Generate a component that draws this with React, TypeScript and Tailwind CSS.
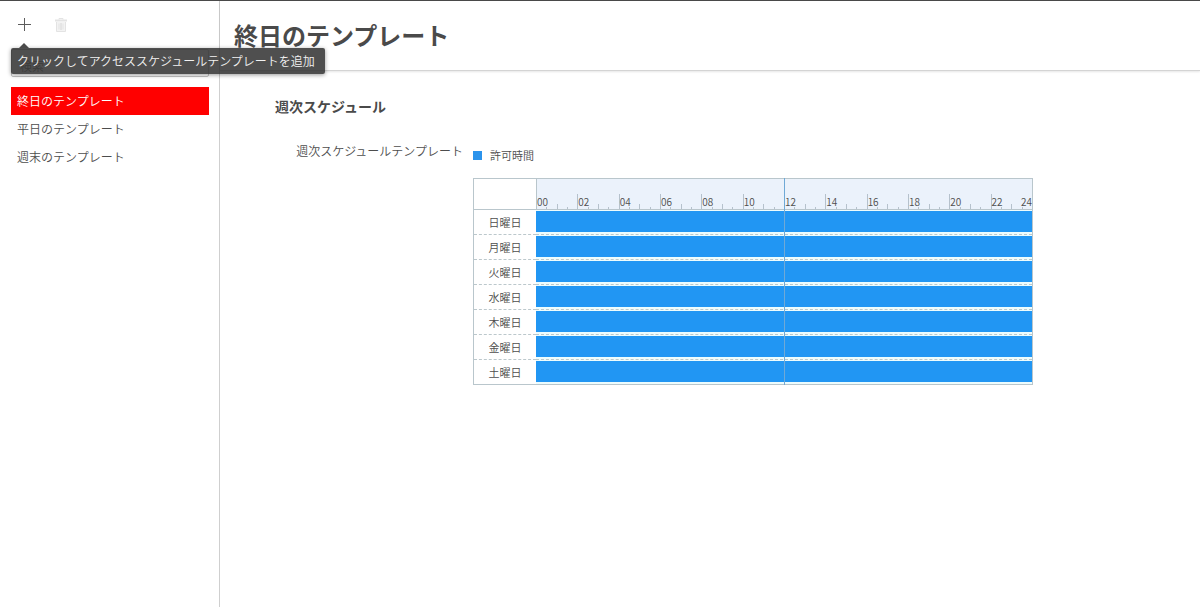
import { useState } from 'react'
import clsx from 'clsx'

const templates = ['終日のテンプレート', '平日のテンプレート', '週末のテンプレート']
const days = ['日曜日', '月曜日', '火曜日', '水曜日', '木曜日', '金曜日', '土曜日']
const hours = ['00', '02', '04', '06', '08', '10', '12', '14', '16', '18', '20', '22']

function PlusIcon() {
  return (
    <svg width="14" height="14" viewBox="0 0 14 14" stroke="#5c5c5c" fill="none" aria-hidden="true">
      <path d="M6.5 0v13M0 6.5h13" />
    </svg>
  )
}

function TrashIcon() {
  return (
    <svg width="12" height="14" viewBox="0 0 12 14" fill="none" stroke="#e3e3e3" aria-hidden="true">
      <path d="M4 1.5V0.5h4v1" />
      <path d="M0 2.5h12" strokeWidth="2" />
      <path d="M1.5 4v9.5h9V4" fill="#f3f3f3" />
      <path d="M4 5.5v6M8 5.5v6" />
      <path d="M6 5v7" stroke="#d6d6d6" />
    </svg>
  )
}

function Sidebar({ selected, onSelect }: { selected: number; onSelect: (i: number) => void }) {
  return (
    <aside className="w-[220px] shrink-0 border-r border-[#cfcfcf] pl-[11px] pr-[10px] pt-4">
      <div className="flex gap-[21px] px-[7px]">
        <div className="relative">
          <button type="button" aria-label="追加" aria-describedby="add-tip" className="block h-4 w-4">
            <PlusIcon />
          </button>
          <div
            id="add-tip"
            role="tooltip"
            className="absolute -left-[7px] top-[31px] z-10 h-[26px] w-[314px] whitespace-nowrap rounded-xs bg-[#323232]/86 px-[6px] leading-[26px] text-[#f2f2f2] shadow-[0_1px_4px_rgba(0,0,0,0.4)]"
          >
            <svg className="absolute -top-[6px] left-[7px]" width="12" height="6" viewBox="0 0 12 6" aria-hidden="true">
              <path d="M1 6l5-5 5 5z" fill="#4b4b4b" />
            </svg>
            クリックしてアクセススケジュールテンプレートを追加
          </div>
        </div>
        <button type="button" aria-label="削除" disabled className="block h-4 w-4">
          <TrashIcon />
        </button>
      </div>
      <input
        type="search"
        aria-label="検索"
        placeholder="検索"
        className="mt-4 block h-7 w-full rounded-xs border border-[#c4c4c4] px-2 pt-1 placeholder:text-[#777]"
      />
      <ul className="mt-[10px]">
        {templates.map((name, i) => (
          <li key={name}>
            <button
              type="button"
              onClick={() => onSelect(i)}
              className={clsx('block h-7 w-full px-[6px] text-left', i === selected && 'bg-[#ff0000] text-white')}
            >
              {name}
            </button>
          </li>
        ))}
      </ul>
    </aside>
  )
}

function HourScale() {
  return (
    <div className="flex h-[30px] items-end text-[10px] leading-[15px]">
      {hours.map((h, i) => (
        <div
          key={h}
          className={clsx('relative flex h-[15px] flex-1 items-end text-left', i > 0 && 'border-l border-[#b5c1cc]')}
        >
          <span className="absolute left-0 top-0">{h}</span>
          <div className="flex flex-1 items-end">
            <span className="h-[2px] flex-1" />
            <span className="h-[2px] flex-1 border-l border-[#b5c1cc]" />
            <span className="h-[5px] flex-1 border-l border-[#b5c1cc]" />
            <span className="h-[2px] flex-1 border-l border-[#b5c1cc]" />
          </div>
          {h === '22' && <span className="absolute right-0 top-0">24</span>}
        </div>
      ))}
    </div>
  )
}

function WeekTable() {
  return (
    <div className="relative mt-[15px]">
      <table className="w-full table-fixed border-separate border-spacing-0 border border-b-0 border-[#b9c6cc] text-[11px]">
        <thead>
          <tr>
            <td className="w-[62px] border-b border-[#b9c6cc] p-0" />
            <th scope="col" className="border-b border-l border-[#b9c6cc] bg-[#ebf2fb] p-0 font-[350]">
              <HourScale />
            </th>
          </tr>
        </thead>
        <tbody>
          {days.map((day, i) => {
            const line = i === days.length - 1 ? 'border-solid border-[#b9c6cc]' : 'border-dashed border-[#bcc8cc]'
            return (
              <tr key={day}>
                <th scope="row" className={clsx('h-[25px] border-b p-0 text-center font-[350] leading-[22px]', line)}>
                  {day}
                </th>
                <td className={clsx('h-[25px] border-b bg-[#edfcfd] p-0', line)}>
                  <div className="mb-px h-[21px] bg-[#2196f3]" />
                </td>
              </tr>
            )
          })}
        </tbody>
      </table>
      <div className="pointer-events-none absolute inset-y-0 left-[63px] right-0 flex">
        <span className="flex-1" />
        <span className="flex-1 border-l border-[#6fa9d6]" />
      </div>
    </div>
  )
}

export default function App() {
  const [selected, setSelected] = useState(0)

  return (
    <div className="flex min-h-screen border-t border-[#4a4a4a] bg-white font-['Noto_Sans_CJK_JP',sans-serif] text-xs font-[350] text-[#4d4d4d]">
      <Sidebar selected={selected} onSelect={setSelected} />
      <main className="min-w-0 flex-1">
        <header className="flex h-[70px] items-center border-b border-[#d4d4d4] px-[14px] pb-[2px] shadow-[0_1px_2px_rgba(0,0,0,0.1)]">
          <h1 className="text-2xl font-bold text-[#4a4a4a]">{templates[selected]}</h1>
        </header>
        <section className="px-[55px] pt-[25px]">
          <h2 className="text-sm font-bold text-[#4a4a4a]">週次スケジュール</h2>
          <div className="mt-6 flex gap-[10px]">
            <h3 className="w-[188px] shrink-0 pt-[3px] text-right">週次スケジュールテンプレート</h3>
            <div className="max-w-[560px] flex-1 pt-[7px]">
              <div className="flex items-center gap-2 text-[11px] leading-4">
                <span className="h-[9px] w-[9px] bg-[#2b93ec]" />
                許可時間
              </div>
              <WeekTable />
            </div>
          </div>
        </section>
      </main>
    </div>
  )
}
